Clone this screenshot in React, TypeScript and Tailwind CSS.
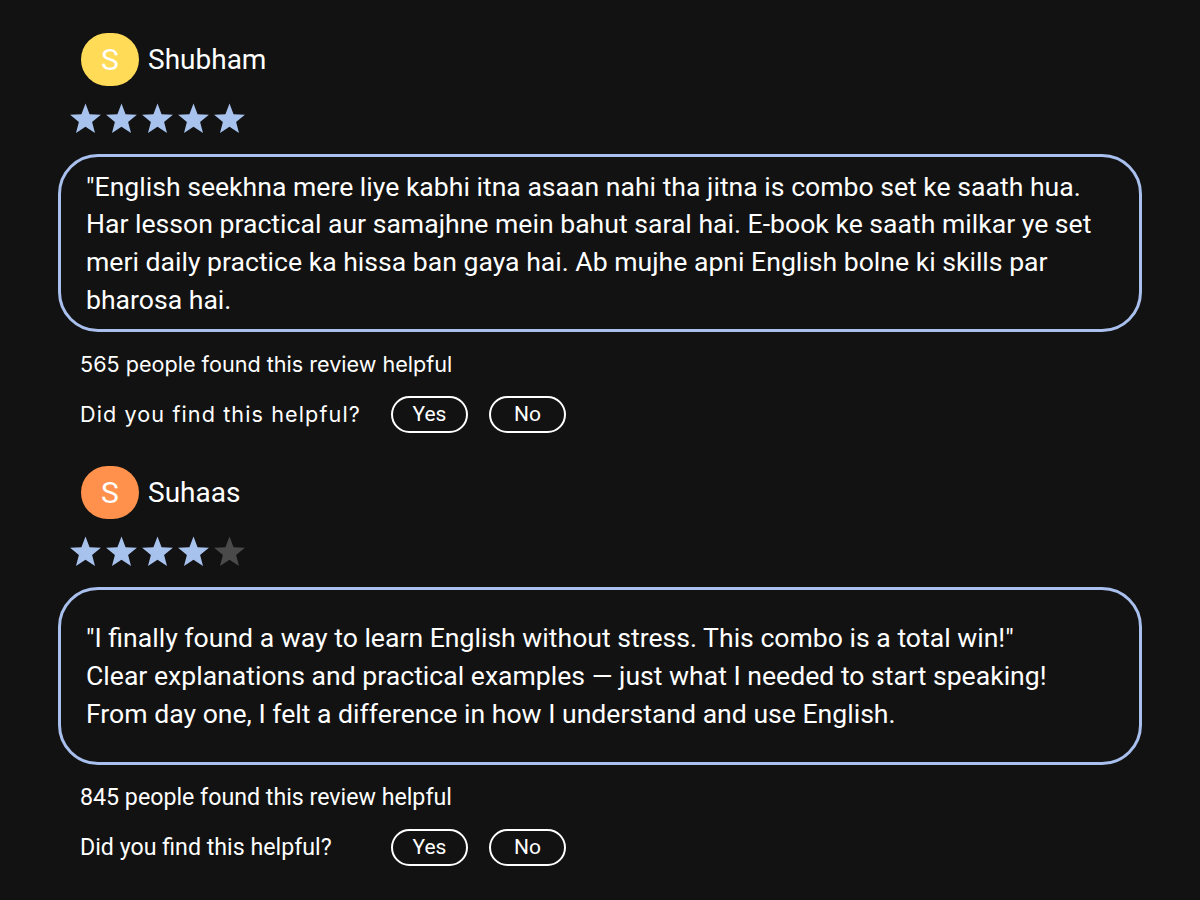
import React from 'react';

type Review = {
  name: string;
  initial: string;
  avatar: string;
  rating: number;
  lines: string[];
  helpful: number;
  metaFont: string;
  askClass: string;
};

const reviews: Review[] = [
  {
    name: 'Shubham',
    initial: 'S',
    avatar: 'bg-[#ffdb58]',
    rating: 5,
    lines: [
      '"English seekhna mere liye kabhi itna asaan nahi tha jitna is combo set ke saath hua.',
      'Har lesson practical aur samajhne mein bahut saral hai. E-book ke saath milkar ye set',
      'meri daily practice ka hissa ban gaya hai. Ab mujhe apni English bolne ki skills par',
      'bharosa hai.',
    ],
    helpful: 565,
    metaFont: "font-['Inter',sans-serif] text-[21.6px]",
    askClass: 'tracking-[1.1px]',
  },
  {
    name: 'Suhaas',
    initial: 'S',
    avatar: 'bg-[#ff914d]',
    rating: 4,
    lines: [
      '"I finally found a way to learn English without stress. This combo is a total win!"',
      'Clear explanations and practical examples — just what I needed to start speaking!',
      'From day one, I felt a difference in how I understand and use English.',
    ],
    helpful: 845,
    metaFont: "font-['Roboto',sans-serif] text-[23.2px]",
    askClass: '',
  },
];

function Star({ filled }: { filled: boolean }) {
  return (
    <svg viewBox="0 0 24 24" className="w-[33px] h-[32px]">
      <path
        d="M12 1.2l3.05 7.95 8.5.45-6.6 5.4 2.2 8.25L12 18.6l-7.15 4.65 2.2-8.25-6.6-5.4 8.5-.45z"
        fill={filled ? '#a8c2ee' : '#4a4a4a'}
      />
    </svg>
  );
}

function ReviewBlock({ r }: { r: Review }) {
  return (
    <div className="flex flex-col">
      <div className="flex items-center gap-[9px] pl-[23px]">
        <div
          className={`w-[58px] h-[53px] rounded-full ${r.avatar} flex items-center justify-center text-white text-[30px] leading-none`}
        >
          {r.initial}
        </div>
        <span className="text-white text-[28px] leading-none">{r.name}</span>
      </div>
      <div className="flex gap-[3px] pl-[11px] mt-[16px]">
        {[0, 1, 2, 3, 4].map((i) => (
          <Star key={i} filled={i < r.rating} />
        ))}
      </div>
      <div className="mt-[20px] h-[178px] border-[3px] border-[#a9c0ee] rounded-[40px] flex items-center px-[25px]">
        <div className="text-white text-[26.6px] leading-[37.7px] whitespace-nowrap">
          {r.lines.map((l, i) => (
            <div key={i}>{l}</div>
          ))}
        </div>
      </div>
      <div className={`pl-[22px] text-white ${r.metaFont}`}>
        <div className="mt-[18px] leading-[28px]">
          {r.helpful} people found this review helpful
        </div>
        <div className="mt-[18px] flex items-center">
          <span className={`w-[311px] ${r.askClass}`}>Did you find this helpful?</span>
          <button className="w-[77px] h-[37px] rounded-full border-2 border-white text-[21px] font-['Roboto',sans-serif] leading-none">
            Yes
          </button>
          <button className="ml-[21px] w-[77px] h-[37px] rounded-full border-2 border-white text-[21px] font-['Roboto',sans-serif] leading-none">
            No
          </button>
        </div>
      </div>
    </div>
  );
}

export default function App() {
  return (
    <div className="w-[1200px] h-[900px] bg-[#121212] font-['Roboto',sans-serif] overflow-hidden">
      <div className="pl-[58px] w-[1142px] pt-[33px] flex flex-col gap-[33px]">
        {reviews.map((r, i) => (
          <ReviewBlock key={i} r={r} />
        ))}
      </div>
    </div>
  );
}
